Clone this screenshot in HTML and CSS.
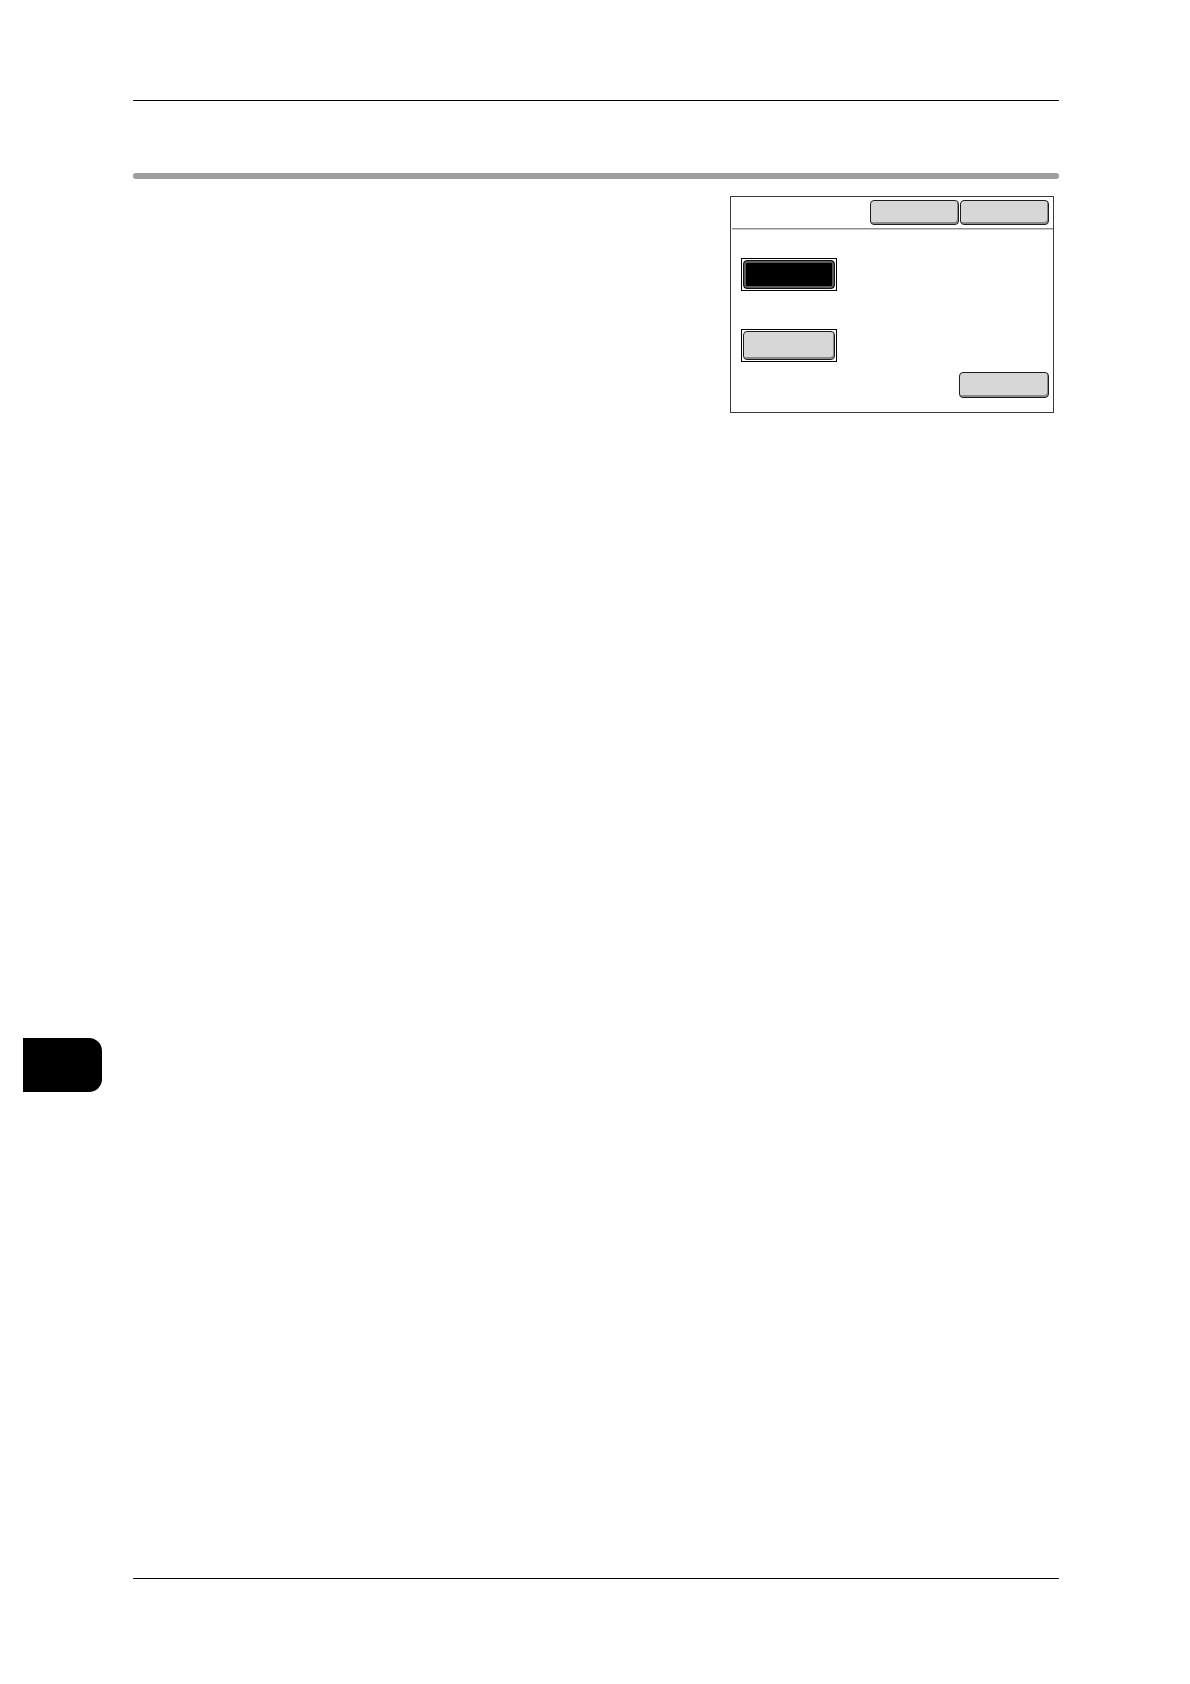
FILE: index.html
```html
<!DOCTYPE html>
<html lang="en">
<head>
<meta charset="utf-8">
<title>Settings screen</title>
<link rel="stylesheet" href="styles.css">
</head>
<body>
<div class="page">
  <div class="header-rule"></div>
  <div class="section-bar"></div>
  <div class="content">
    <div class="panel">
      <div class="panel-top">
        <div class="btn btn-top"></div>
        <div class="btn btn-top"></div>
      </div>
      <div class="panel-divider"></div>
      <div class="options">
        <div class="frame"><div class="btn btn-option btn-selected"></div></div>
        <div class="frame frame-second"><div class="btn btn-option"></div></div>
      </div>
      <div class="panel-bottom">
        <div class="btn btn-close"></div>
      </div>
    </div>
  </div>
  <div class="thumb-tab"></div>
  <div class="footer-rule"></div>
</div>
</body>
</html>
```
FILE: styles.css
```css
html, body {
  margin: 0;
  padding: 0;
  background: #ffffff;
  font-family: "Liberation Sans", Arial, sans-serif;
}

.page {
  width: 1190px;
  padding-top: 100px;
  padding-bottom: 100px;
  box-sizing: border-box;
}

.header-rule {
  margin: 0 0 0 133px;
  width: 926px;
  height: 1px;
  background: #000;
}

.section-bar {
  margin: 72px 0 0 133px;
  width: 926px;
  height: 6px;
  border-radius: 3px;
  background: #9e9e9e;
}

.content {
  margin: 17px 0 0 133px;
  width: 926px;
  display: flex;
  justify-content: flex-end;
}

.panel {
  width: 324px;
  height: 217px;
  margin-right: 5px;
  border: 1px solid #3a3a3a;
  display: flex;
  flex-direction: column;
  box-sizing: border-box;
}

.panel-top {
  display: flex;
  justify-content: flex-end;
  gap: 1px;
  padding: 3px 4px 0 0;
}

.btn {
  box-sizing: border-box;
  border: 1px solid #1c1c1c;
  border-radius: 4px;
  background: #d7d7d7;
  box-shadow: inset -1px -2px 0 #8a8a8a;
}

.btn-top {
  width: 89px;
  height: 25px;
}

.panel-divider {
  margin: 3px 0 0 1px;
  height: 2px;
  background: linear-gradient(#8f8f8f 50%, #c8c8c8 50%);
}

.options {
  display: flex;
  flex-direction: column;
  padding: 28px 0 0 10px;
}

.frame {
  width: 96px;
  height: 33px;
  box-sizing: border-box;
  border: 1px solid #000;
  padding: 1px;
}

.frame-second {
  margin-top: 38px;
}

.btn-option {
  width: 100%;
  height: 100%;
}

.btn-selected {
  background: #000;
  border-color: #111;
  box-shadow: inset 0 0 0 2px #5c5c5c, inset -1px -2px 0 3px #000;
}

.panel-bottom {
  display: flex;
  justify-content: flex-end;
  padding: 10px 4px 0 0;
}

.btn-close {
  width: 90px;
  height: 26px;
}

.thumb-tab {
  margin: 625px 0 0 23px;
  width: 79px;
  height: 54px;
  background: #000;
  border-radius: 0 13px 13px 0;
}

.footer-rule {
  margin: 486px 0 0 133px;
  width: 926px;
  height: 1px;
  background: #000;
}
```
